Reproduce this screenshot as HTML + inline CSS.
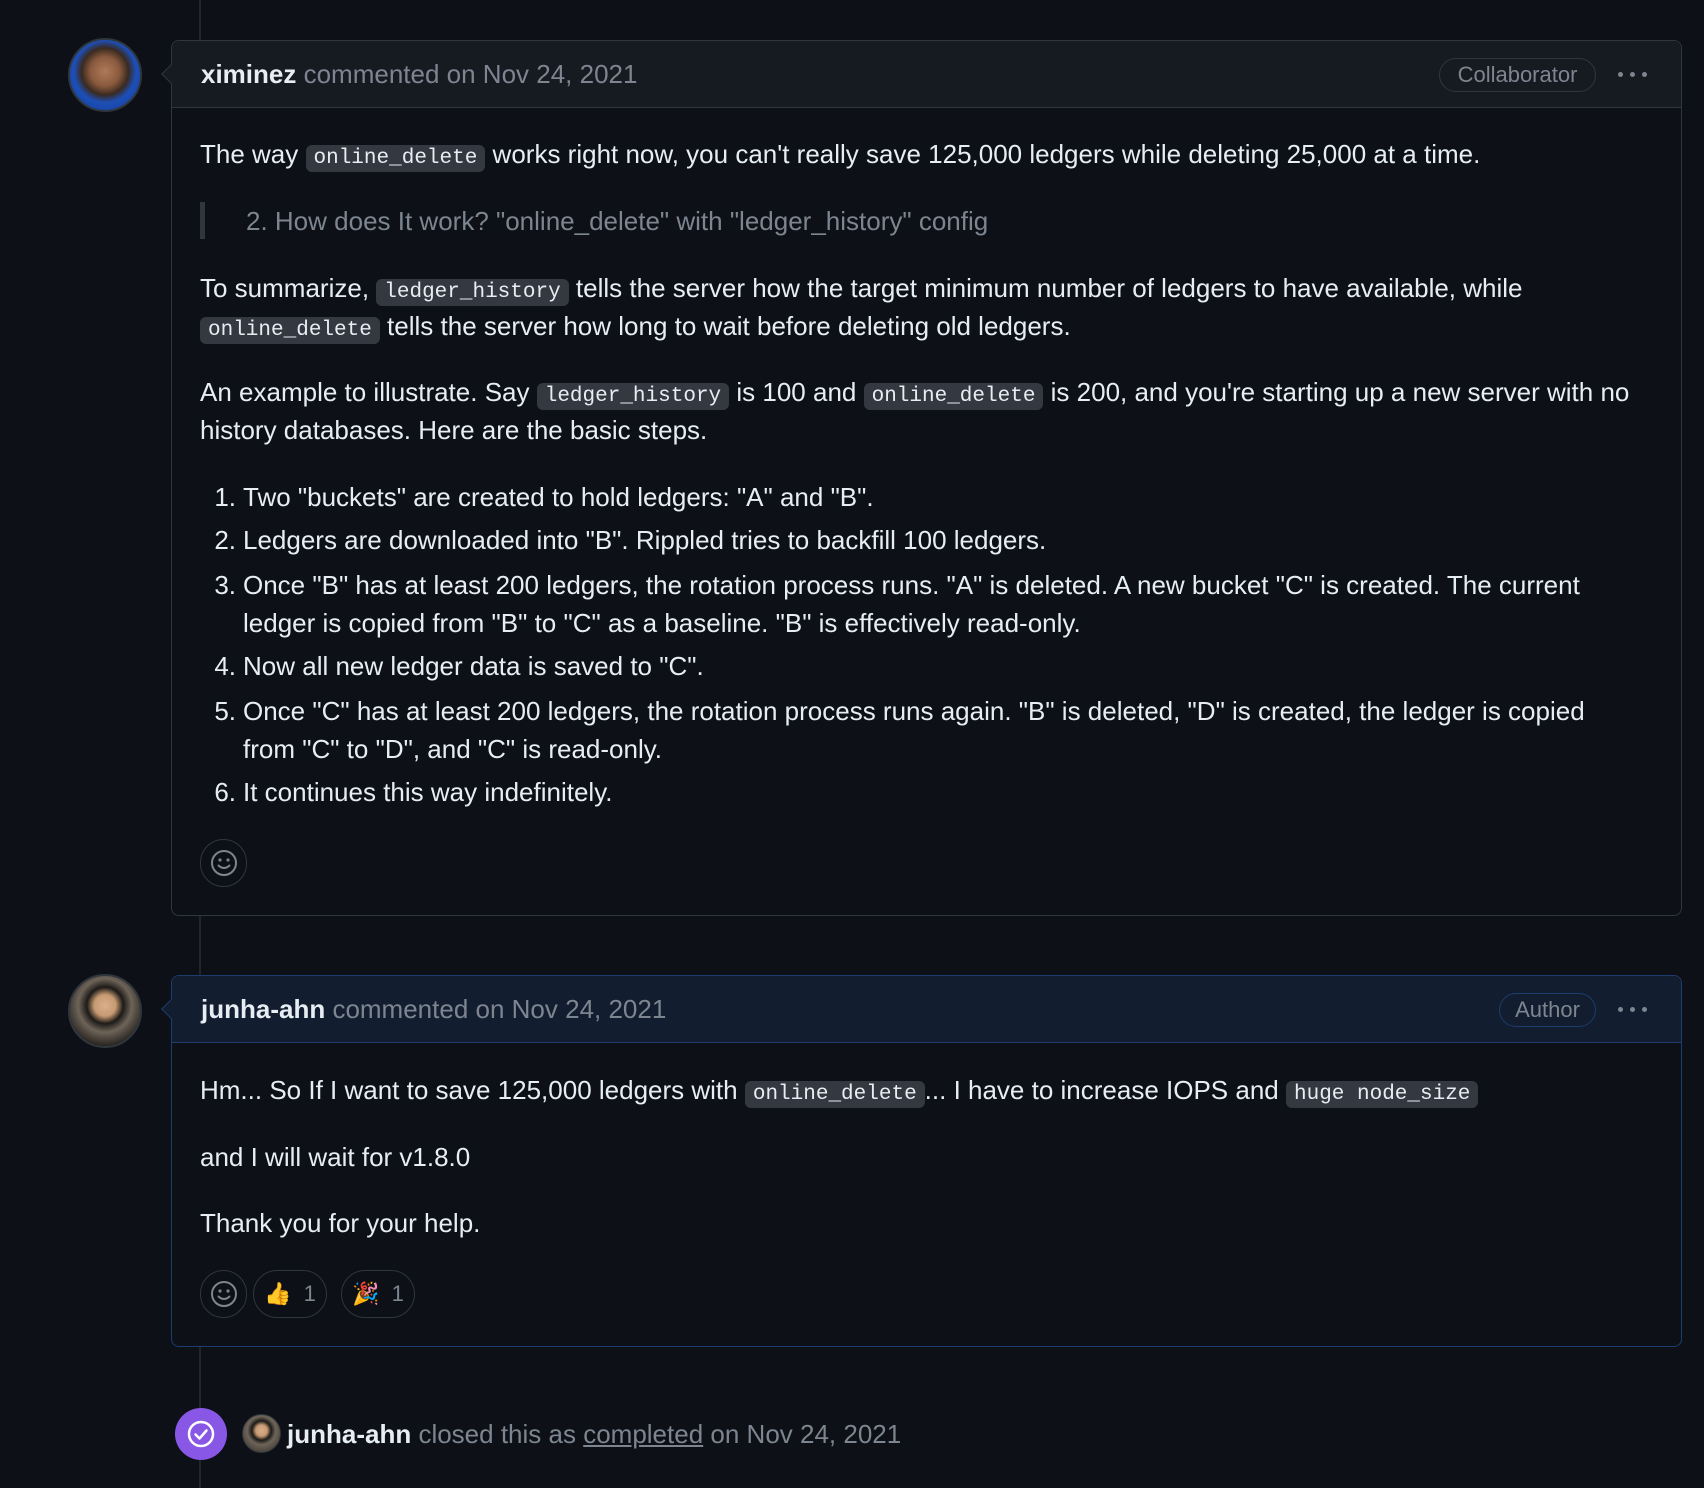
<!DOCTYPE html>
<html><head><meta charset="utf-8"><style>
*{box-sizing:border-box;margin:0;padding:0}
body{width:1704px;height:1488px;background:#0d1117;position:relative;overflow:hidden;font-family:"Liberation Sans",sans-serif;color:#e6edf3;font-size:26px}
.abs{position:absolute}
.line{position:absolute;left:199px;width:2px;background:#21262d}
.box{position:absolute;left:171px;width:1511px;border:1px solid #30363d;border-radius:8px}
.hdr{position:absolute;left:0;top:0;right:0;height:67px;background:#161b22;border-bottom:1px solid #30363d;border-radius:8px 8px 0 0}
.ht{position:absolute;left:29px;top:0;line-height:66px;font-size:26px;color:#7d8590;white-space:nowrap}
.ht b{color:#e6edf3}
.badge{position:absolute;height:34px;border:1px solid #30363d;border-radius:17px;color:#7d8590;font-size:22px;line-height:32px;text-align:center}
.dots{position:absolute;width:30px;height:6px}
.dots i{position:absolute;top:0;width:5px;height:5px;border-radius:50%;background:#7d8590}
.p{position:absolute;left:200px;line-height:38px;white-space:nowrap}
code{font-family:"Liberation Mono",monospace;font-size:21px;background:#343941;border-radius:6px;padding:2px 8px;line-height:1}
.num{display:inline-block;width:43px;text-align:right;padding-right:7px}
.av{position:absolute;border-radius:50%;overflow:hidden}
.react{position:absolute;height:48px;border:1px solid #30363d;border-radius:24px;background:#0d1117;color:#7d8590;font-size:22px;line-height:46px}
.arrow{position:absolute;width:14px;height:14px;transform:rotate(45deg);border-left:1px solid #30363d;border-bottom:1px solid #30363d;background:#161b22}
</style></head><body>
<div class="line" style="top:0;height:1488px"></div>

<div class="av" style="left:68px;top:38px;width:74px;height:74px;background:radial-gradient(circle at 50% 45%,#b07a5a 0,#8a5a3e 28%,#3a2a20 45%,#1d4fb8 60%,#123a8c 100%);border:2px solid #30363d"></div>

<div class="box" style="top:40px;height:876px;background:#0d1117">
 <div class="hdr"></div>
 <div class="ht"><b>ximinez</b> commented on Nov 24, 2021</div>
 <div class="badge" style="left:1267px;top:17px;width:157px">Collaborator</div>
 <div class="dots" style="left:1446px;top:31px"><i style="left:0"></i><i style="left:12px"></i><i style="left:24px"></i></div>
</div>
<div class="arrow" style="left:164px;top:67px"></div>

<div class="p" style="top:135px">The way <code>online_delete</code> works right now, you can't really save 125,000 ledgers while deleting 25,000 at a time.</div>
<div class="abs" style="left:200px;top:202px;width:5px;height:37px;background:#30363d"></div>
<div class="p" style="top:202px;left:246px;color:#7d8590">2. How does It work? "online_delete" with "ledger_history" config</div>
<div class="p" style="top:269px">To summarize, <code>ledger_history</code> tells the server how the target minimum number of ledgers to have available, while<br><code>online_delete</code> tells the server how long to wait before deleting old ledgers.</div>
<div class="p" style="top:373px">An example to illustrate. Say <code>ledger_history</code> is 100 and <code>online_delete</code> is 200, and you're starting up a new server with no<br>history databases. Here are the basic steps.</div>
<div class="p" style="top:478px"><span class="num">1.</span>Two "buckets" are created to hold ledgers: "A" and "B".</div>
<div class="p" style="top:521px"><span class="num">2.</span>Ledgers are downloaded into "B". Rippled tries to backfill 100 ledgers.</div>
<div class="p" style="top:566px"><span class="num">3.</span>Once "B" has at least 200 ledgers, the rotation process runs. "A" is deleted. A new bucket "C" is created. The current<br><span class="num"></span>ledger is copied from "B" to "C" as a baseline. "B" is effectively read-only.</div>
<div class="p" style="top:647px"><span class="num">4.</span>Now all new ledger data is saved to "C".</div>
<div class="p" style="top:692px"><span class="num">5.</span>Once "C" has at least 200 ledgers, the rotation process runs again. "B" is deleted, "D" is created, the ledger is copied<br><span class="num"></span>from "C" to "D", and "C" is read-only.</div>
<div class="p" style="top:773px"><span class="num">6.</span>It continues this way indefinitely.</div>

<div class="react" style="left:200px;top:839px;width:47px"><svg width="47" height="46" viewBox="0 0 47 46"><circle cx="23" cy="23" r="12" fill="none" stroke="#7d8590" stroke-width="2"/><circle cx="19" cy="20" r="1.6" fill="#7d8590"/><circle cx="27" cy="20" r="1.6" fill="#7d8590"/><path d="M17.5 25.5q5.5 5 11 0" fill="none" stroke="#7d8590" stroke-width="2" stroke-linecap="round"/></svg></div>

<div class="av" style="left:68px;top:974px;width:74px;height:74px;background:radial-gradient(circle at 50% 42%,#d9b08c 0,#c79a72 20%,#1c1a18 34%,#6e6458 50%,#2a2622 75%,#1b1816 100%);border:2px solid #30363d"></div>

<div class="box" style="top:975px;height:372px;background:#0d1117;border-color:#1c3d6e">
 <div class="hdr" style="background:#121d2f;border-bottom-color:#1c3d6e"></div>
 <div class="ht"><b>junha-ahn</b> commented on Nov 24, 2021</div>
 <div class="badge" style="left:1327px;top:17px;width:97px;border-color:#1c3d6e">Author</div>
 <div class="dots" style="left:1446px;top:31px"><i style="left:0"></i><i style="left:12px"></i><i style="left:24px"></i></div>
</div>
<div class="arrow" style="left:164px;top:1002px;background:#121d2f;border-color:#1c3d6e"></div>

<div class="p" style="top:1071px">Hm... So If I want to save 125,000 ledgers with <code>online_delete</code>... I have to increase IOPS and <code>huge node_size</code></div>
<div class="p" style="top:1138px">and I will wait for v1.8.0</div>
<div class="p" style="top:1204px">Thank you for your help.</div>

<div class="react" style="left:200px;top:1270px;width:47px"><svg width="47" height="46" viewBox="0 0 47 46"><circle cx="23" cy="23" r="12" fill="none" stroke="#7d8590" stroke-width="2"/><circle cx="19" cy="20" r="1.6" fill="#7d8590"/><circle cx="27" cy="20" r="1.6" fill="#7d8590"/><path d="M17.5 25.5q5.5 5 11 0" fill="none" stroke="#7d8590" stroke-width="2" stroke-linecap="round"/></svg></div>
<div class="react" style="left:253px;top:1270px;width:74px;padding-left:10px">👍 &nbsp;1</div>
<div class="react" style="left:341px;top:1270px;width:74px;padding-left:10px">🎉 &nbsp;1</div>

<div class="abs" style="left:175px;top:1408px;width:52px;height:52px;border-radius:50%;background:#8957e5"></div>
<svg class="abs" style="left:175px;top:1408px" width="52" height="52" viewBox="0 0 52 52"><circle cx="26" cy="26" r="12" fill="none" stroke="#fff" stroke-width="2.5"/><path d="M20.5 26.5l4 4 7-8" fill="none" stroke="#fff" stroke-width="2.5" stroke-linecap="round" stroke-linejoin="round"/></svg>
<div class="av" style="left:242px;top:1414px;width:39px;height:39px;background:radial-gradient(circle at 50% 42%,#d9b08c 0,#c79a72 20%,#1c1a18 34%,#6e6458 50%,#2a2622 100%);border:1px solid #30363d"></div>
<div class="p" style="left:287px;top:1415px;color:#7d8590"><b style="color:#e6edf3">junha-ahn</b> closed this as <span style="text-decoration:underline">completed</span> on Nov 24, 2021</div>
</body></html>
